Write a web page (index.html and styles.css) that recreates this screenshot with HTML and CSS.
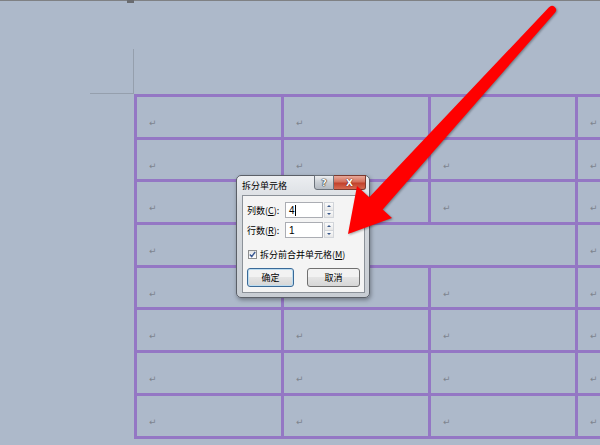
FILE: index.html
```html
<!DOCTYPE html>
<html>
<head>
    <title>拆分单元格</title>
    <link rel="stylesheet" href="styles.css">
</head>
<body>
    <div class="page">
        <div class="ruler"><span class="ruler-mark"></span></div>
        <div class="crop"></div>

        <div class="doc-table">
            <div class="cell">↵</div><div class="cell">↵</div><div class="cell">↵</div><div class="cell">↵</div>
            <div class="cell">↵</div><div class="cell">↵</div><div class="cell">↵</div><div class="cell">↵</div>
            <div class="cell">↵</div><div class="cell">↵</div><div class="cell">↵</div><div class="cell">↵</div>
            <div class="cell merged">↵</div><div class="cell">↵</div>
            <div class="cell">↵</div><div class="cell">↵</div><div class="cell">↵</div><div class="cell">↵</div>
            <div class="cell">↵</div><div class="cell">↵</div><div class="cell">↵</div><div class="cell">↵</div>
            <div class="cell">↵</div><div class="cell">↵</div><div class="cell">↵</div><div class="cell">↵</div>
            <div class="cell">↵</div><div class="cell">↵</div><div class="cell">↵</div><div class="cell">↵</div>
        </div>

        <div class="dialog">
            <div class="titlebar">
                <span class="title">拆分单元格</span>
                <div class="caption-buttons">
                    <span class="btn-help">?</span>
                    <span class="btn-close">X</span>
                </div>
            </div>
            <div class="client">
                <div class="field">
                    <span class="field-label">列数(<u>C</u>):</span>
                    <span class="input">4<i class="caret"></i></span>
                    <span class="spinner"><b class="up"></b><b class="down"></b></span>
                </div>
                <div class="field">
                    <span class="field-label">行数(<u>R</u>):</span>
                    <span class="input">1</span>
                    <span class="spinner"><b class="up"></b><b class="down"></b></span>
                </div>
                <div class="check">
                    <span class="box">
                        <svg width="7" height="7" viewBox="0 0 7 7"><path d="M0.8 3.6 L2.7 5.6 L6.2 1" fill="none" stroke="#3b5a94" stroke-width="1.4"/></svg>
                    </span>
                    <span>拆分前合并单元格(<u>M</u>)</span>
                </div>
                <div class="buttons">
                    <button class="btn default">确定</button>
                    <button class="btn cancel">取消</button>
                </div>
            </div>
        </div>

        <svg class="arrow" width="600" height="445" viewBox="0 0 600 445">
            <path d="M549 7.3 L369.3 197.2 L357 186 L348 234 L392 218 L382.7 209.4 L555 12.7 A4 4 0 0 0 549 7.3 Z" fill="#ff0000"/>
        </svg>
    </div>
</body>
</html>
```

FILE: styles.css
```css
html, body {
    margin: 0;
    height: 100%;
    overflow: hidden;
}

body {
    background-color: #adb9ca;
    font-family: "Noto Sans CJK SC", sans-serif;
    color: #000;
}

.page {
    position: relative;
    width: 600px;
    height: 445px;
    overflow: hidden;
}

.ruler {
    display: flex;
    height: 1px;
    background-color: #7f8184;
}

.ruler-mark {
    margin-left: 127px;
    width: 7px;
    height: 3px;
    background-color: #6a6c70;
}

.crop {
    margin-left: 90px;
    margin-top: 48px;
    width: 43px;
    height: 44px;
    border-right: 1px solid #959fad;
    border-bottom: 1px solid #959fad;
}

.doc-table {
    display: grid;
    grid-template-columns: repeat(4, 147px);
    grid-auto-rows: 42.7px;
    width: max-content;
    margin-left: 134px;
    border-top: 3px solid #9477c4;
    border-left: 3px solid #9477c4;
}

.cell {
    box-sizing: border-box;
    border-right: 3px solid #9477c4;
    border-bottom: 3px solid #9477c4;
    padding: 21px 0 0 12px;
    font-family: "DejaVu Sans", sans-serif;
    font-size: 9px;
    line-height: 10px;
    color: #7d848e;
}

.cell.merged {
    grid-column: span 3;
}

/* dialog */
.dialog {
    position: absolute;
    left: 236px;
    top: 175px;
    width: 134px;
    height: 123px;
    box-sizing: border-box;
    display: flex;
    flex-direction: column;
    border: 1px solid #5b6068;
    border-radius: 5px;
    background: linear-gradient(#eceef1, #d5d9de 25%, #c8cdd3);
    box-shadow: 1px 2px 4px rgba(0, 0, 0, 0.35);
    font-size: 9px;
}

.titlebar {
    position: relative;
    display: flex;
    align-items: center;
    height: 19px;
    padding-left: 5px;
}

.caption-buttons {
    position: absolute;
    top: -1px;
    right: 3px;
    display: flex;
}

.btn-help,
.btn-close {
    display: flex;
    align-items: center;
    justify-content: center;
    height: 15px;
    box-sizing: border-box;
    font-family: "DejaVu Sans", sans-serif;
    font-weight: bold;
    font-size: 9px;
    color: #fff;
}

.btn-help {
    width: 20px;
    border: 1px solid #6c737c;
    border-radius: 0 0 0 3px;
    background: linear-gradient(#eceef0, #c9ced4 50%, #b4bac2);
    text-shadow: 0 0 1px #222, 0 0 1px #222, 0 0 1px #222;
}

.btn-close {
    width: 32px;
    border: 1px solid #7a3a30;
    border-left: none;
    border-radius: 0 0 3px 0;
    background: linear-gradient(#e9a99a, #d3705c 45%, #c2412b 55%, #d66a52);
    text-shadow: 0 0 1px #5a1a10, 0 0 1px #5a1a10;
}

.client {
    flex: 1;
    margin: 0 4px 4px 5px;
    padding: 6px 0 0 4px;
    border: 1px solid #8c9299;
    background-color: #f4f4f4;
}

.field {
    display: flex;
    align-items: center;
    height: 16px;
}

.field + .field {
    margin-top: 4px;
}

.field-label {
    width: 38px;
}

.input {
    display: flex;
    align-items: center;
    width: 38px;
    height: 16px;
    box-sizing: border-box;
    padding-left: 3px;
    border: 1px solid #abadb3;
    background-color: #fff;
    font-family: "Liberation Sans", sans-serif;
    font-size: 10px;
}

.caret {
    width: 1px;
    height: 11px;
    background-color: #000;
}

.spinner {
    display: flex;
    flex-direction: column;
    margin-left: 1px;
    width: 10px;
    height: 16px;
    box-sizing: border-box;
    border: 1px solid #d2d5da;
}

.spinner b {
    flex: 1;
    display: flex;
    align-items: center;
    justify-content: center;
    background: linear-gradient(#fafafa, #e8e8e8);
}

.spinner b + b {
    border-top: 1px solid #d2d5da;
}

.spinner .up::after,
.spinner .down::after {
    content: "";
    border-left: 2px solid transparent;
    border-right: 2px solid transparent;
}

.spinner .up::after {
    border-bottom: 2px solid #3d5a8c;
}

.spinner .down::after {
    border-top: 2px solid #3d5a8c;
}

.check {
    display: flex;
    align-items: center;
    gap: 3px;
    margin-top: 11px;
    margin-left: 1px;
    height: 10px;
}

.box {
    display: flex;
    align-items: center;
    justify-content: center;
    width: 9px;
    height: 9px;
    box-sizing: border-box;
    border: 1px solid #8e8f8f;
    background: linear-gradient(#e6e6e6, #fff);
}

.buttons {
    display: flex;
    gap: 13px;
    margin-top: 9px;
}

.btn {
    height: 19px;
    padding: 0;
    border: 1px solid #707070;
    border-radius: 3px;
    background: linear-gradient(#f2f2f2 45%, #e4e4e4 50%, #d6d6d6);
    font-family: "Noto Sans CJK SC", sans-serif;
    font-size: 9px;
    color: #000;
}

.btn.default {
    width: 47px;
    border-color: #3a6a98;
    box-shadow: inset 0 0 0 1px #bcdcf0;
}

.btn.cancel {
    width: 53px;
}

.arrow {
    position: absolute;
    left: 0;
    top: 0;
    filter: drop-shadow(1px 1px 1px rgba(0, 0, 0, 0.35));
}
```
